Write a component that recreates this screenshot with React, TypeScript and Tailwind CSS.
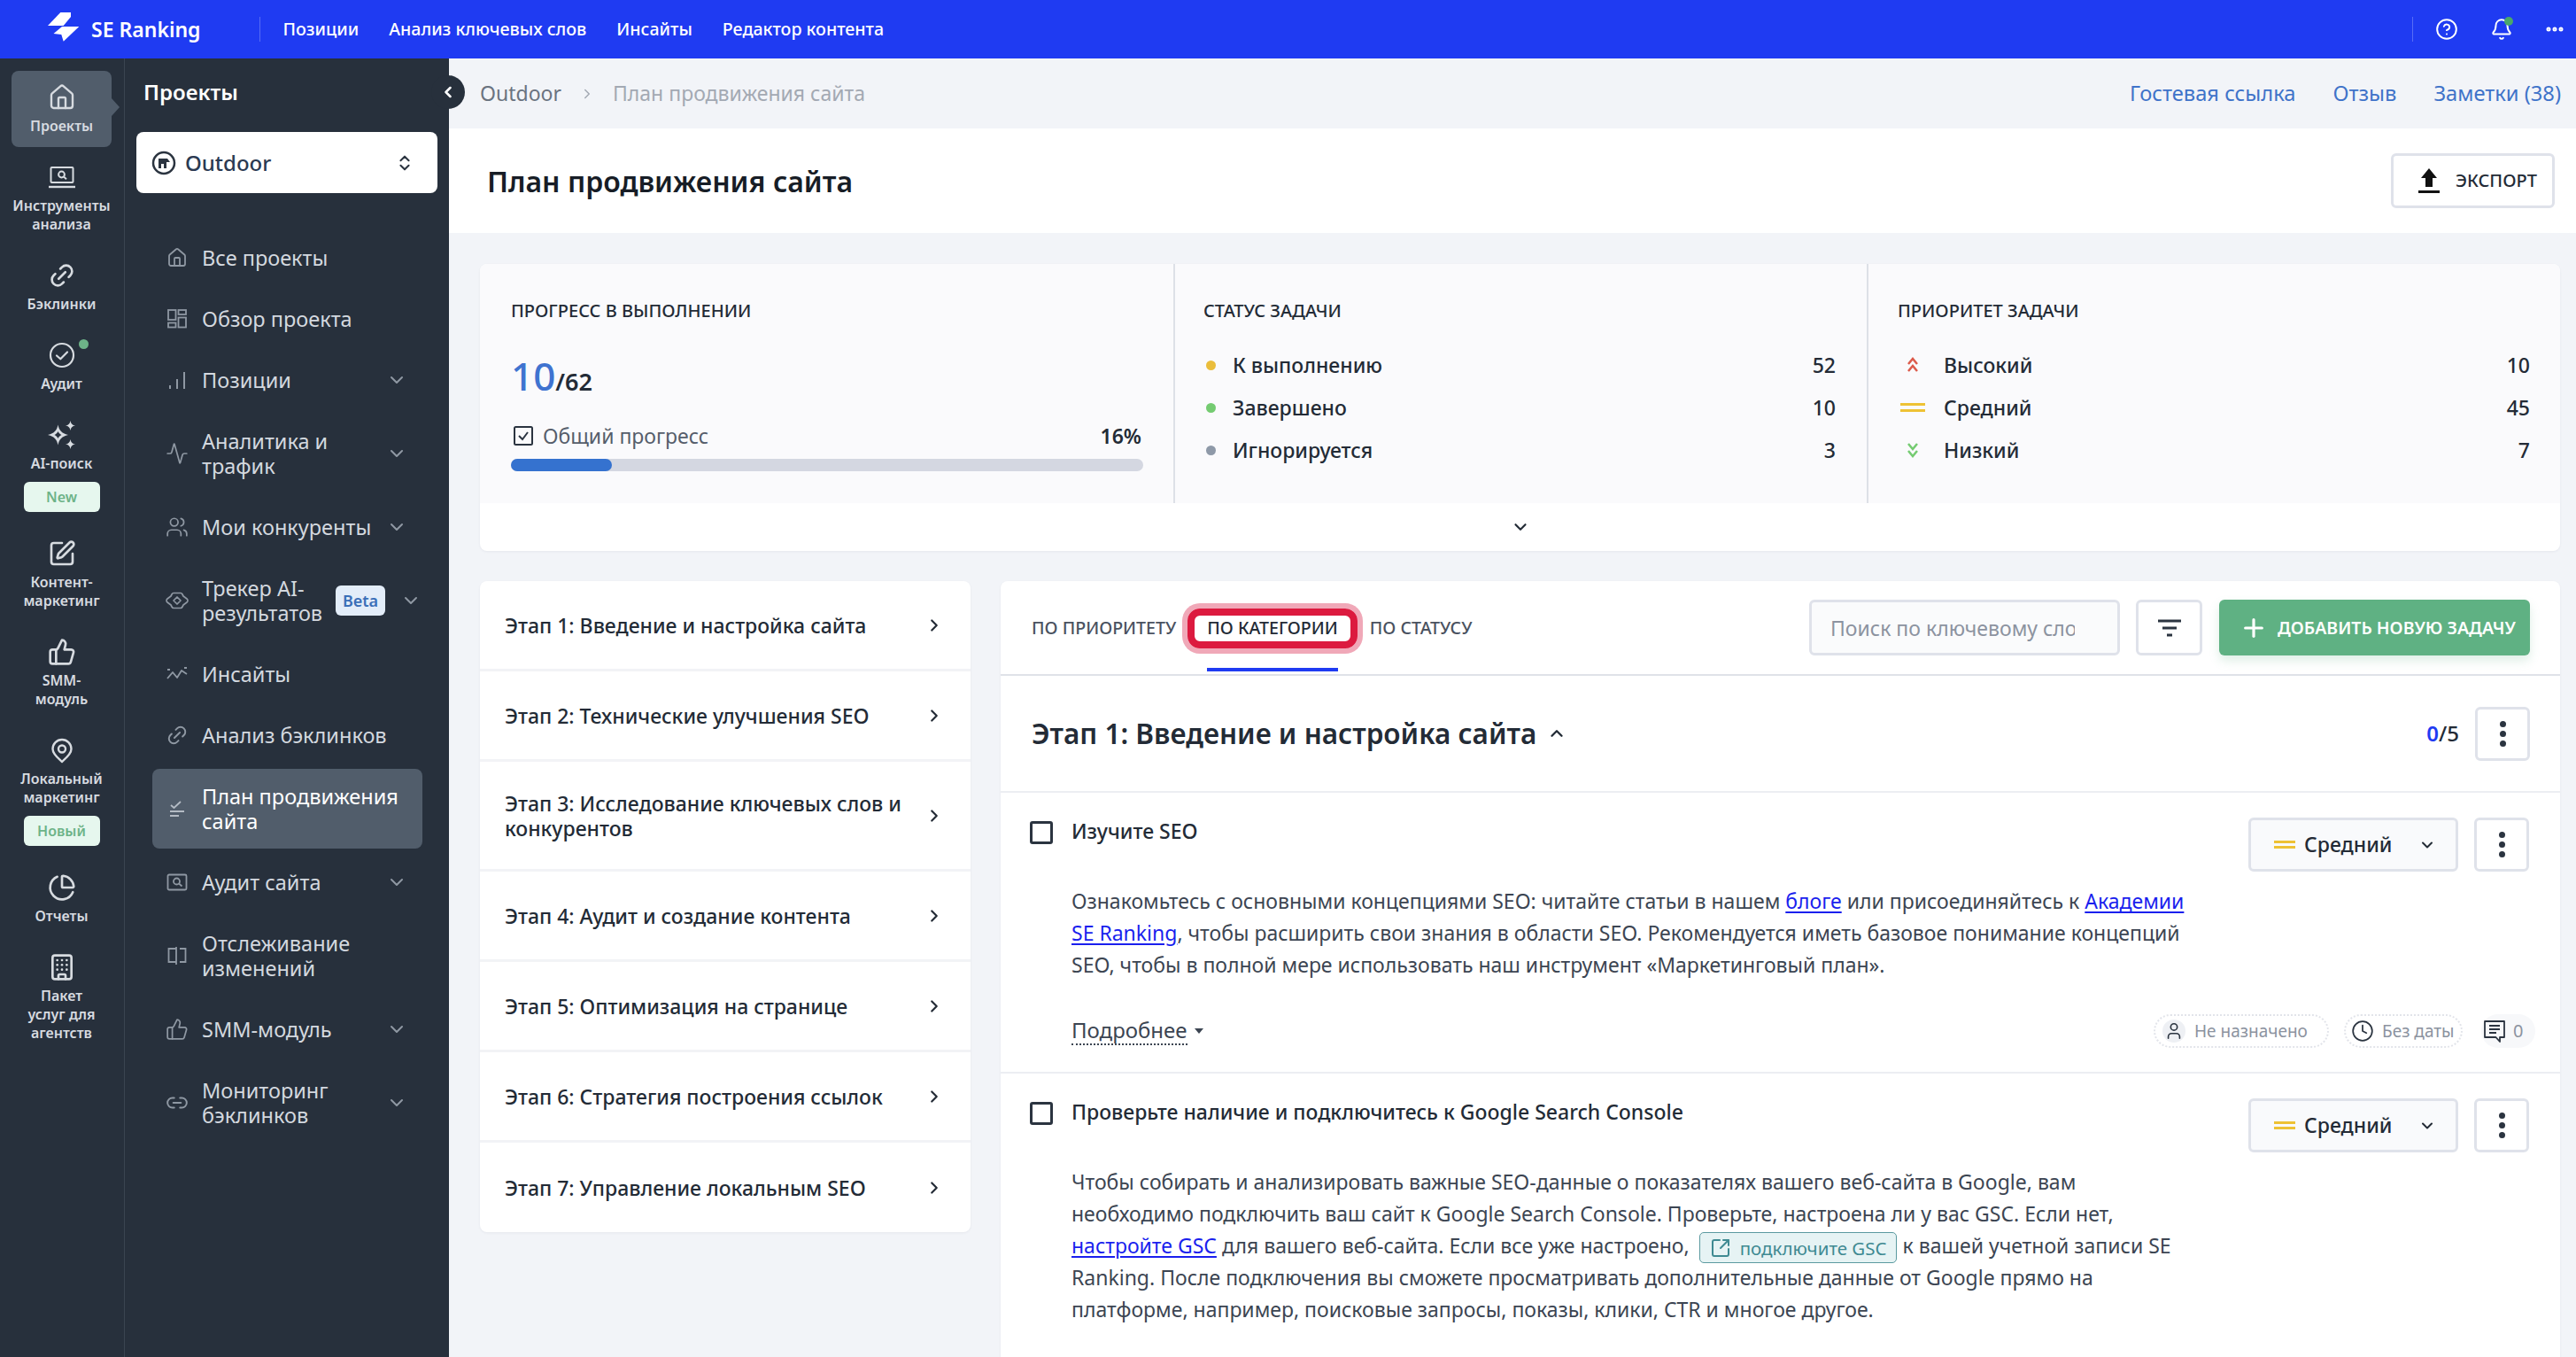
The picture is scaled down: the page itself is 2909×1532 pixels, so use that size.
import type { ReactNode } from 'react'
import {
  Building,
  ChevronDown,
  ChevronRight,
  ChevronUp,
  ChevronsUpDown,
  CircleHelp,
  Clock,
  Bell,
  Ellipsis,
  House,
  Link2,
  PieChart,
  Plus,
  SquareArrowOutUpRight,
  SquarePen,
  ThumbsUp,
  User,
  Users,
  Activity,
} from 'lucide-react'

const railStroke = '#d7dbe0'
const navStroke = '#8f98a3'

function LaptopSearch({ size = 32 }: { size?: number }) {
  return (
    <svg width={size} height={size} viewBox="0 0 32 32" fill="none" stroke={railStroke} strokeWidth="2">
      <rect x="3.5" y="5" width="25" height="17" rx="1" />
      <path d="M1 27h30" strokeWidth="2.4" />
      <circle cx="15.5" cy="13" r="3.4" />
      <path d="m18 15.6 3 2.6" />
    </svg>
  )
}

function CheckCircle() {
  return (
    <svg width="32" height="32" viewBox="0 0 32 32" fill="none" stroke={railStroke} strokeWidth="2.2">
      <circle cx="16" cy="16" r="13" />
      <path d="m10 16.500 4.300 3.800L22 12.500" strokeLinecap="round" strokeLinejoin="round" />
    </svg>
  )
}

function Sparks() {
  return (
    <svg width="32" height="32" viewBox="0 0 32 32" fill={railStroke}>
      <path
        fillRule="evenodd"
        d="M11.500 4.500c1 5.500 4 10 11.500 11.500-7.500 1.500-10.500 6-11.500 11.500C10.500 22 7.500 17.500 0 16c7.500-1.500 10.500-6 11.500-11.500Zm0 7.500c-.7 1.700-2.200 3.200-4 4 1.800.8 3.300 2.300 4 4 .7-1.700 2.200-3.200 4-4-1.800-.8-3.300-2.300-4-4Z"
      />
      <path d="M25.500 0c.5 3.200 2.200 5 5.500 5.500-3.300.5-5 2.300-5.500 5.500-.5-3.200-2.200-5-5.500-5.500 3.300-.5 5-2.300 5.500-5.500ZM25.500 21c.5 3.200 2.200 5 5.500 5.500-3.300.5-5 2.300-5.500 5.500-.5-3.200-2.200-5-5.500-5.500 3.300-.5 5-2.300 5.500-5.500Z" />
    </svg>
  )
}

function Pin() {
  return (
    <svg width="32" height="32" viewBox="0 0 32 32" fill="none" stroke={railStroke} strokeWidth="2.4">
      <path d="M16 29c-1-1.400-10.500-7.800-10.500-14.500a10.500 10.500 0 0 1 21 0C26.500 21.200 17 27.600 16 29Z" strokeLinejoin="round" />
      <circle cx="16" cy="14.500" r="4" />
    </svg>
  )
}

function Logo() {
  return (
    <svg width="36" height="38" viewBox="4 9 36 38" fill="#ffffff" strokeLinejoin="round">
      <path d="M4 24 19 8.300h11V14l-8.300 10Z" />
      <path d="M10.500 33 20 25h19.300L21.700 41.700 19.300 34Z" />
    </svg>
  )
}

function GridIcon() {
  return (
    <svg width="24" height="24" viewBox="0 0 24 24" fill="none" stroke={navStroke} strokeWidth="1.8">
      <rect x="2" y="2" width="8.500" height="11" />
      <rect x="13.500" y="2" width="8.500" height="5" />
      <rect x="2" y="16.500" width="8.500" height="5" />
      <rect x="13.500" y="10.500" width="8.500" height="11" />
    </svg>
  )
}

function BarsIcon() {
  return (
    <svg width="24" height="24" viewBox="0 0 24 24" fill="none" stroke={navStroke} strokeWidth="2">
      <path d="M4 22v-4M12 22V11M20 22V3" />
    </svg>
  )
}

function CompareIcon() {
  return (
    <svg width="24" height="24" viewBox="0 0 24 24" fill="none" stroke={navStroke} strokeWidth="1.8">
      <path d="M11 4H2.500v15H11M11 2v20M15 4h6.500v15H15" />
    </svg>
  )
}

function AuditIcon() {
  return (
    <svg width="24" height="24" viewBox="0 0 24 24" fill="none" stroke={navStroke} strokeWidth="1.8">
      <rect x="1.500" y="3.500" width="21" height="17" rx="1.500" />
      <circle cx="11.500" cy="11" r="3.500" />
      <path d="m14 13.500 3.500 3" />
    </svg>
  )
}

function TrackerIcon() {
  return (
    <svg width="26" height="26" viewBox="0 0 26 26" fill="none" stroke={navStroke} strokeWidth="1.700" strokeLinejoin="round">
      <path d="M9 4.500h8c1 0 1.500.5 2 1.500l1 2 4 3c1.300 1 1.300 3 0 4l-4 3-1 2c-.5 1-1 1.500-2 1.500H9c-1 0-1.500-.5-2-1.500l-1-2-4-3c-1.300-1-1.300-3 0-4l4-3 1-2c.5-1 1-1.500 2-1.500Z" />
      <path d="M13 9 17 13 13 17 9 13Z" />
    </svg>
  )
}

function InsightIcon() {
  return (
    <svg width="26" height="24" viewBox="0 0 26 24" fill="none" stroke={navStroke} strokeWidth="1.800" strokeLinejoin="round">
      <path d="m2 17 6-7 5 6 5-8 6 4" />
      <path d="M2 7h3M21 5h3" />
    </svg>
  )
}

function PlanIcon() {
  return (
    <svg width="24" height="24" viewBox="0 0 24 24" fill="none" stroke="#b4bbc4" strokeWidth="1.800">
      <path d="m5 8 3.500 3L16 4M4 15h16M4 20h10" />
    </svg>
  )
}

function CommentIcon() {
  return (
    <svg width="28" height="28" viewBox="0 0 28 28" fill="none" stroke="#2b3440" strokeWidth="1.800" className="mr-[7px]">
      <path d="M3 3h22v18h-5v5l-4.500-5H3Z" strokeLinejoin="round" />
      <path d="M8 8h12M8 12h12M8 16h8" />
    </svg>
  )
}

function Dots() {
  return (
    <div className="flex flex-col gap-[4px]">
      <span className="size-[7px] rounded-full bg-[#2b3440]" />
      <span className="size-[7px] rounded-full bg-[#2b3440]" />
      <span className="size-[7px] rounded-full bg-[#2b3440]" />
    </div>
  )
}

function MenuButton() {
  return (
    <button className="flex h-[61px] w-[62px] items-center justify-center rounded-[6px] border-[3px] border-[#dfe2ea] bg-white">
      <Dots />
    </button>
  )
}

const rail: {
  label: ReactNode
  icon: ReactNode
  active?: boolean
  badge?: string
  dot?: boolean
}[] = [
  { label: 'Проекты', icon: <House size={32} color={railStroke} strokeWidth={1.8} />, active: true },
  { label: <>Инструменты<br />анализа</>, icon: <LaptopSearch /> },
  { label: 'Бэклинки', icon: <Link2 size={32} color={railStroke} strokeWidth={2} className="-rotate-45" /> },
  { label: 'Аудит', icon: <CheckCircle />, dot: true },
  { label: 'AI-поиск', icon: <Sparks />, badge: 'New' },
  { label: <>Контент-<br />маркетинг</>, icon: <SquarePen size={32} color={railStroke} strokeWidth={2} /> },
  { label: <>SMM-<br />модуль</>, icon: <ThumbsUp size={32} color={railStroke} strokeWidth={2} /> },
  { label: <>Локальный<br />маркетинг</>, icon: <Pin />, badge: 'Новый' },
  { label: 'Отчеты', icon: <PieChart size={32} color={railStroke} strokeWidth={2} /> },
  { label: <>Пакет<br />услуг для<br />агентств</>, icon: <Building size={32} color={railStroke} strokeWidth={2} /> },
]

const navItems: {
  label: ReactNode
  icon: ReactNode
  chevron?: boolean
  active?: boolean
  beta?: boolean
}[] = [
  { label: 'Все проекты', icon: <House size={24} color={navStroke} strokeWidth={1.8} /> },
  { label: 'Обзор проекта', icon: <GridIcon /> },
  { label: 'Позиции', icon: <BarsIcon />, chevron: true },
  { label: <>Аналитика и<br />трафик</>, icon: <Activity size={26} color={navStroke} strokeWidth={1.6} />, chevron: true },
  { label: 'Мои конкуренты', icon: <Users size={26} color={navStroke} strokeWidth={1.6} />, chevron: true },
  { label: <>Трекер AI-<br />результатов</>, icon: <TrackerIcon />, chevron: true, beta: true },
  { label: 'Инсайты', icon: <InsightIcon /> },
  { label: 'Анализ бэклинков', icon: <Link2 size={26} color={navStroke} strokeWidth={1.8} className="-rotate-45" /> },
  { label: <>План продвижения<br />сайта</>, icon: <PlanIcon />, active: true },
  { label: 'Аудит сайта', icon: <AuditIcon />, chevron: true },
  { label: <>Отслеживание<br />изменений</>, icon: <CompareIcon /> },
  { label: 'SMM-модуль', icon: <ThumbsUp size={26} color={navStroke} strokeWidth={1.6} />, chevron: true },
  { label: <>Мониторинг<br />бэклинков</>, icon: <Link2 size={26} color={navStroke} strokeWidth={1.8} />, chevron: true },
]

const stages: ReactNode[] = [
  'Этап 1: Введение и настройка сайта',
  'Этап 2: Технические улучшения SEO',
  <>Этап 3: Исследование ключевых слов и<br />конкурентов</>,
  'Этап 4: Аудит и создание контента',
  'Этап 5: Оптимизация на странице',
  'Этап 6: Стратегия построения ссылок',
  'Этап 7: Управление локальным SEO',
]

function Rail() {
  return (
    <aside className="flex w-[141px] shrink-0 flex-col gap-[4px] border-r border-[#3a4450] pt-[14px] pl-[13px]">
      {rail.map((item, i) => (
        <div
          key={i}
          className={`relative flex w-[113px] flex-col items-center rounded-[8px] pt-[14px] pb-[13px] ${item.active ? 'bg-[#515d6b]' : ''}`}
        >
          <div className="relative flex size-[32px] items-center justify-center">
            {item.icon}
            {item.dot && <span className="absolute -top-[2px] -right-[14px] size-[11px] rounded-full bg-[#6db388]" />}
          </div>
          <div className="mt-[6px] text-center text-[16px] leading-[21px] font-semibold whitespace-nowrap text-[#d7dbe0]">
            {item.label}
          </div>
          {item.badge && (
            <div className="mt-[10px] flex h-[34px] w-[86px] items-center justify-center rounded-[6px] bg-[#e6f7ee] text-[16px] font-semibold text-[#6db388]">
              {item.badge}
            </div>
          )}
          {item.active && (
            <span className="absolute top-[31px] -right-[9px] border-y-[10px] border-l-[9px] border-y-transparent border-l-[#515d6b]" />
          )}
        </div>
      ))}
    </aside>
  )
}

function Sidebar() {
  return (
    <aside className="flex w-[366px] shrink-0 flex-col">
      <div className="mt-[22px] ml-[21px] text-[24px] leading-[32px] font-semibold text-white">Проекты</div>
      <div className="mt-[29px] ml-[13px] flex h-[69px] w-[340px] items-center rounded-[8px] bg-white pr-[26px] pl-[17px]">
        <svg width="28" height="28" viewBox="0 0 28 28" fill="none">
          <circle cx="14" cy="14" r="12" stroke="#2b3440" strokeWidth="2.500" />
          <path d="M8 9h10l3 4h-4v7h-3v-5h-3v5H8Z" fill="#2b3440" />
        </svg>
        <span className="ml-[10px] flex-1 text-[24px] font-medium text-[#2b3a52]">Outdoor</span>
        <ChevronsUpDown size={22} color="#2b3440" strokeWidth={2.2} />
      </div>
      <nav className="mt-[42px] flex flex-col gap-[7px] pl-[31px]">
        {navItems.map((item, i) => (
          <div
            key={i}
            className={`flex w-[305px] items-center rounded-[8px] py-[17px] pl-[15px] ${item.active ? 'bg-[#515d6b]' : ''}`}
          >
            <span className="flex w-[26px] shrink-0 justify-center">{item.icon}</span>
            <span className={`ml-[15px] flex-1 text-[23.5px] leading-[28px] whitespace-nowrap ${item.active ? 'text-white' : 'text-[#d3d8df]'}`}>
              {item.label}
            </span>
            {item.beta && (
              <span className="mr-[17px] flex h-[34px] w-[56px] items-center justify-center rounded-[6px] bg-[#e3edf9] text-[18px] font-semibold text-[#3b6fb8]">
                Beta
              </span>
            )}
            {item.chevron && (
              <ChevronDown size={24} color="#8f98a3" strokeWidth={2} className={item.beta ? 'mr-[1px]' : 'mr-[17px]'} />
            )}
          </div>
        ))}
      </nav>
    </aside>
  )
}

function StatRow({ mark, label, value }: { mark: ReactNode; label: string; value: number }) {
  return (
    <div className="flex h-[48px] items-center text-[23px] font-medium text-[#232b36]">
      {mark}
      <span className="flex-1">{label}</span>
      <span>{value}</span>
    </div>
  )
}

function StatDot({ color }: { color: string }) {
  return (
    <span className="mr-[19px] ml-[3px] w-[11px]">
      <span className={`block size-[11px] rounded-full ${color}`} />
    </span>
  )
}

function PriorityMark({ children }: { children: ReactNode }) {
  return <span className="mr-[18px] flex w-[34px] justify-center">{children}</span>
}

function Stats() {
  return (
    <section className="h-[324px] rounded-[8px] bg-white shadow-[0_1px_3px_rgba(30,40,60,0.06)]">
      <div className="flex h-[270px] rounded-t-[8px] bg-[#fafafc]">
        <div className="w-[785px] shrink-0 border-r-2 border-[#dde0e7] pt-[41px] pr-[34px] pl-[35px]">
          <h3 className="text-[20px] leading-[24px] font-medium text-[#232b36] uppercase">Прогресс в выполнении</h3>
          <div className="mt-[36px] flex h-[50px] items-baseline font-semibold text-[#232b36]">
            <span className="text-[44px] leading-[50px] font-medium text-[#3f73d0]">10</span>
            <span className="text-[27px]">/62</span>
          </div>
          <div className="mt-[28px] flex h-[30px] items-center pr-[2px] text-[23px] text-[#565e6b]">
            <svg width="24" height="26" viewBox="0 0 24 26" fill="none" stroke="#2b3440" strokeWidth="2" className="mr-[10px] ml-[2px]">
              <rect x="2" y="3" width="20" height="20" rx="1.500" />
              <path d="m7 13 4 4 6-8" />
            </svg>
            <span className="flex-1">Общий прогресс</span>
            <span className="font-semibold text-[#232b36]">16%</span>
          </div>
          <div className="mt-[11px] h-[14px] rounded-full bg-[#d4d7e1]">
            <div className="h-full rounded-full bg-[#3572cf]" style={{ width: '16%' }} />
          </div>
        </div>
        <div className="w-[783px] shrink-0 border-r-2 border-[#dde0e7] pt-[41px] pr-[35px] pl-[32px]">
          <h3 className="text-[20px] leading-[24px] font-medium text-[#232b36] uppercase">Статус задачи</h3>
          <div className="mt-[25px]">
            <StatRow mark={<StatDot color="bg-[#eabd3b]" />} label="К выполнению" value={52} />
            <StatRow mark={<StatDot color="bg-[#74cb71]" />} label="Завершено" value={10} />
            <StatRow mark={<StatDot color="bg-[#8e99a8]" />} label="Игнорируется" value={3} />
          </div>
        </div>
        <div className="flex-1 pt-[41px] pr-[34px] pl-[33px]">
          <h3 className="text-[20px] leading-[24px] font-medium text-[#232b36] uppercase">Приоритет задачи</h3>
          <div className="mt-[25px]">
            <StatRow
              mark={
                <PriorityMark>
                  <svg width="14" height="18" viewBox="0 0 14 18" fill="none" stroke="#dc5b4b" strokeWidth="2.500">
                    <path d="m2 8 5-6 5 6M2 16l5-6 5 6" />
                  </svg>
                </PriorityMark>
              }
              label="Высокий"
              value={10}
            />
            <StatRow
              mark={
                <PriorityMark>
                  <span className="flex w-[28px] flex-col gap-[4px]">
                    <span className="h-[3px] bg-[#eec234]" />
                    <span className="h-[3px] bg-[#eec234]" />
                  </span>
                </PriorityMark>
              }
              label="Средний"
              value={45}
            />
            <StatRow
              mark={
                <PriorityMark>
                  <svg width="14" height="18" viewBox="0 0 14 18" fill="none" stroke="#74cb71" strokeWidth="2.500">
                    <path d="m2 2 5 6 5-6M2 10l5 6 5-6" />
                  </svg>
                </PriorityMark>
              }
              label="Низкий"
              value={7}
            />
          </div>
        </div>
      </div>
      <div className="flex h-[54px] items-center justify-center pl-[1px]">
        <ChevronDown size={22} color="#232b36" strokeWidth={2.4} />
      </div>
    </section>
  )
}

function Stages() {
  return (
    <div className="h-[735px] w-[554px] shrink-0 overflow-hidden rounded-[8px] bg-white shadow-[0_1px_3px_rgba(30,40,60,0.06)]">
      {stages.map((s, i) => (
        <div
          key={i}
          className={`flex items-center border-[#f2f3f6] pr-[30px] pl-[28px] ${i === 2 ? 'h-[124px]' : 'h-[102px]'} ${i < 6 ? 'border-b-[3px]' : ''}`}
        >
          <span className="flex-1 text-[23px] leading-[28px] font-medium text-[#232b36]">{s}</span>
          <ChevronRight size={22} color="#232b36" strokeWidth={2.4} />
        </div>
      ))}
    </div>
  )
}

function PriorityButton() {
  return (
    <button className="flex h-[61px] w-[237px] items-center rounded-[6px] border-[3px] border-[#dfe2ea] bg-[#f9fafc] pr-[22px] pl-[26px] text-[23px] font-medium text-[#232b36]">
      <span className="mr-[10px] flex w-[24px] flex-col gap-[3px]">
        <span className="h-[3px] bg-[#eec234]" />
        <span className="h-[3px] bg-[#eec234]" />
      </span>
      <span className="flex-1 text-left">Средний</span>
      <ChevronDown size={20} color="#232b36" strokeWidth={2.4} />
    </button>
  )
}

const linkClass = 'text-[#1a1fee] underline underline-offset-[3px]'

function Task({ title, children, footer }: { title: string; children: ReactNode; footer?: boolean }) {
  return (
    <div className={`pt-[28px] pr-[35px] pl-[33px] ${footer ? 'border-b-2 border-[#eceef2] pb-[27px]' : ''}`}>
      <div className="flex items-start">
        <span className="mt-[4px] size-[26px] shrink-0 rounded-[3px] border-[3px] border-[#2b3440]" />
        <h4 className="ml-[21px] flex-1 text-[23px] leading-[30px] font-medium text-[#232b36]">{title}</h4>
        <PriorityButton />
        <span className="ml-[18px]">
          <MenuButton />
        </span>
      </div>
      <p className="mt-[15px] ml-[47px] text-[23px] leading-[36px] text-[#3c4552]">{children}</p>
      {footer && (
        <div className="mt-[38px] ml-[47px] flex h-[38px] items-center">
          <span className="border-b-2 border-dotted border-[#3c4552] text-[24px] leading-[30px] text-[#3c4552]">Подробнее</span>
          <span className="ml-[8px] border-x-[5px] border-t-[6px] border-x-transparent border-t-[#3c4552]" />
          <div className="flex-1" />
          <span className="flex h-[38px] w-[198px] items-center rounded-full border-2 border-dotted border-[#e2e4ea] pl-[8px] text-[19px] text-[#8c93a0]">
            <span className="mr-[10px] flex size-[26px] items-center justify-center rounded-full bg-[#eef0f4]">
              <User size={22} color="#2b3440" strokeWidth={1.8} />
            </span>
            Не назначено
          </span>
          <span className="ml-[17px] flex h-[38px] w-[134px] items-center rounded-full border-2 border-dotted border-[#e2e4ea] pl-[6px] text-[19px] text-[#8c93a0]">
            <Clock size={26} color="#2b3440" strokeWidth={1.6} className="mr-[9px]" />
            Без даты
          </span>
          <span className="ml-[21px] -mr-[7px] flex h-[38px] w-[61px] items-center rounded-full bg-[#f7f8fa] pl-[1px] text-[20px] text-[#8c93a0]">
            <CommentIcon />0
          </span>
        </div>
      )}
    </div>
  )
}

function Board() {
  return (
    <div className="min-w-0 flex-1 rounded-t-[8px] bg-white pb-[80px] shadow-[0_1px_3px_rgba(30,40,60,0.06)]">
      <div className="flex items-center border-b-2 border-[#dfe2e8] py-[21px] pr-[34px] pl-[35px] text-[19.6px] font-medium whitespace-nowrap text-[#4a5260]">
        <span>ПО ПРИОРИТЕТУ</span>
        <span className="relative ml-[35px] text-[#232b36]">
          ПО КАТЕГОРИИ
          <span className="absolute -inset-x-[22px] -top-[7px] -bottom-[9px] rounded-[14px] border-[8px] border-[#dc1a3f] shadow-[0_0_0_6px_#f0a8b8]" />
          <span className="absolute inset-x-0 -bottom-[35px] h-[4px] bg-[#1f3bf2]" />
        </span>
        <span className="ml-[36px]">ПО СТАТУСУ</span>
        <div className="flex-1" />
        <input
          placeholder="Поиск по ключевому слову"
          className="h-[63px] w-[351px] rounded-[6px] border-[3px] border-[#dfe2ea] bg-[#fafbfc] pr-[48px] pl-[21px] text-[23px] font-normal placeholder:text-[#8c93a0]"
        />
        <button className="ml-[18px] flex h-[63px] w-[75px] items-center justify-center rounded-[6px] border-[3px] border-[#dfe2ea] bg-white">
          <svg width="28" height="24" viewBox="0 0 28 24" stroke="#2b3440" strokeWidth="3">
            <path d="M1 4h26M6 12h16M11 20h6" />
          </svg>
        </button>
        <button className="ml-[19px] flex h-[63px] w-[351px] items-center rounded-[6px] bg-[#5fb183] pl-[23px] text-[19.5px] font-semibold text-white shadow-[0_6px_12px_rgba(95,177,131,0.2)]">
          <Plus size={32} strokeWidth={2.4} className="mr-[11px]" />
          ДОБАВИТЬ НОВУЮ ЗАДАЧУ
        </button>
      </div>
      <div className="flex h-[132px] items-center border-b-2 border-[#eceef2] pr-[34px] pl-[35px]">
        <h2 className="text-[31.5px] font-semibold text-[#232b36]">Этап 1: Введение и настройка сайта</h2>
        <ChevronUp size={22} color="#232b36" strokeWidth={2.6} className="ml-[12px]" />
        <div className="flex-1" />
        <span className="mr-[18px] text-[24px] font-medium text-[#232b36]">
          <span className="font-semibold text-[#1f3bf2]">0</span>/5
        </span>
        <MenuButton />
      </div>
      <Task title="Изучите SEO" footer>
        Ознакомьтесь с основными концепциями SEO: читайте статьи в нашем <a className={linkClass}>блоге</a> или присоединяйтесь к <a className={linkClass}>Академии</a>
        <br />
        <a className={linkClass}>SE Ranking</a>, чтобы расширить свои знания в области SEO. Рекомендуется иметь базовое понимание концепций
        <br />
        SEO, чтобы в полной мере использовать наш инструмент «Маркетинговый план».
      </Task>
      <Task title="Проверьте наличие и подключитесь к Google Search Console">
        Чтобы собирать и анализировать важные SEO-данные о показателях вашего веб-сайта в Google, вам
        <br />
        необходимо подключить ваш сайт к Google Search Console. Проверьте, настроена ли у вас GSC. Если нет,
        <br />
        <a className={linkClass}>настройте GSC</a> для вашего веб-сайта. Если все уже настроено,{' '}
        <span className="ml-[5px] -my-[4px] inline-flex h-[35px] items-center rounded-[5px] border border-[#5b9aa0] bg-[#e6f3f4] px-[11px] align-middle text-[20.5px] text-[#3f8a92]">
          <SquareArrowOutUpRight size={24} className="mr-[10px]" />
          подключите GSC
        </span>{' '}
        к вашей учетной записи SE
        <br />
        Ranking. После подключения вы сможете просматривать дополнительные данные от Google прямо на
        <br />
        платформе, например, поисковые запросы, показы, клики, CTR и многое другое.
      </Task>
    </div>
  )
}

export default function App() {
  return (
    <div className="flex h-screen flex-col overflow-hidden bg-[#f2f4f8] font-['Noto_Sans',sans-serif]">
      <header className="flex h-[66px] shrink-0 items-center bg-[#1f3bf2] pr-[12px] pl-[54px] text-white">
        <Logo />
        <span className="ml-[13px] text-[23px] font-semibold">SE Ranking</span>
        <span className="ml-[66px] h-[28px] w-px bg-white/25" />
        <nav className="ml-[26px] flex gap-[34px] text-[19.6px] font-medium">
          <span>Позиции</span>
          <span>Анализ ключевых слов</span>
          <span>Инсайты</span>
          <span>Редактор контента</span>
        </nav>
        <div className="flex-1" />
        <span className="h-[28px] w-px bg-white/25" />
        <CircleHelp size={26} strokeWidth={1.8} className="ml-[25px]" />
        <span className="relative ml-[36px]">
          <Bell size={26} strokeWidth={1.8} />
          <span className="absolute -top-[1px] right-0 size-[10px] rounded-full bg-[#49a76b]" />
        </span>
        <Ellipsis size={24} strokeWidth={3} className="ml-[35px]" />
      </header>
      <div className="flex min-h-0 flex-1">
        <div className="relative flex shrink-0 bg-[#27303c]">
          <Rail />
          <Sidebar />
          <button className="absolute top-[19px] -right-[18px] flex size-[38px] items-center justify-center rounded-full bg-[#27303c]">
            <ChevronRight size={20} color="#fff" strokeWidth={3} className="rotate-180" />
          </button>
        </div>
        <main className="min-w-0 flex-1">
          <div className="flex h-[79px] items-center pr-[17px] pl-[35px] text-[23px]">
            <span className="text-[#6a7380]">Outdoor</span>
            <ChevronRight size={18} color="#a3a9b3" strokeWidth={2} className="mx-[20px]" />
            <span className="text-[#a3a9b3]">План продвижения сайта</span>
            <div className="flex-1" />
            <div className="flex gap-[42px] text-[23.7px] text-[#3f73c9]">
              <span>Гостевая ссылка</span>
              <span>Отзыв</span>
              <span>Заметки (38)</span>
            </div>
          </div>
          <div className="flex h-[118px] items-center justify-between bg-white pr-[24px] pl-[43px]">
            <h1 className="mt-[2px] text-[32px] font-semibold text-[#171d26]">План продвижения сайта</h1>
            <button className="flex h-[62px] w-[185px] items-center rounded-[6px] border-[3px] border-[#dfe2ea] bg-white pl-[27px] text-[20px] font-medium text-[#232b36]">
              <svg width="26" height="30" viewBox="0 0 26 30" fill="#111" className="mr-[17px]">
                <path d="M13 1 22 12h-5v10H9V12H4ZM1 26h24v3H1Z" />
              </svg>
              ЭКСПОРТ
            </button>
          </div>
          <div className="pt-[35px] pr-[18px] pl-[35px]">
            <Stats />
            <div className="mt-[34px] flex items-start gap-[34px]">
              <Stages />
              <Board />
            </div>
          </div>
        </main>
      </div>
    </div>
  )
}
